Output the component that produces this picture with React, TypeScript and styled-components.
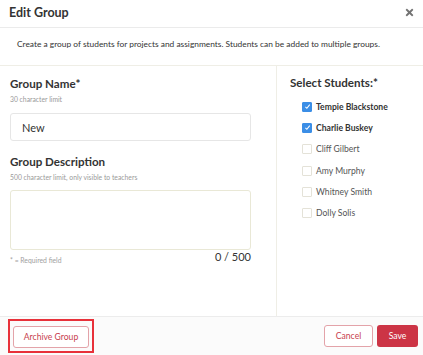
import React from 'react';
import styled, { createGlobalStyle } from 'styled-components';
import { FaTimes } from 'react-icons/fa';

const GlobalStyle = createGlobalStyle`
  html, body {
    margin: 0;
    padding: 0;
    background: #ffffff;
  }
  body {
    font-family: Lato, "Open Sans", "Liberation Sans", sans-serif;
    color: #333333;
  }
`;

const Modal = styled.div`
  width: 423px;
  height: 355px;
  display: flex;
  flex-direction: column;
  background: #ffffff;
  overflow: hidden;
`;

const Header = styled.div`
  height: 28px;
  box-sizing: border-box;
  border-bottom: 1px solid #ebebeb;
  display: flex;
  align-items: center;
  justify-content: space-between;
  padding: 0 8px 2px 9px;
`;

const Title = styled.h1`
  margin: 0;
  font-size: 12.5px;
  font-weight: 700;
  color: #333333;
`;

const CloseButton = styled.button`
  border: none;
  background: none;
  padding: 0;
  display: flex;
  color: #737373;
  font-size: 11px;
`;

const Intro = styled.p`
  margin: 0;
  height: 38px;
  box-sizing: border-box;
  border-bottom: 1px solid #efeee6;
  padding: 11px 0 0 17px;
  font-size: 8.4px;
  color: #333333;
`;

const Body = styled.div`
  flex: 1;
  display: grid;
  grid-template-columns: 277px 1fr;
`;

const LeftColumn = styled.div`
  border-right: 1px solid #efeee6;
  padding: 10px 25px 0 10px;
`;

const RightColumn = styled.div`
  padding: 9px 0 0 13px;
`;

const Label = styled.h2<{ $gap?: number }>`
  margin: ${p => p.$gap ?? 0}px 0 0;
  font-size: 11.6px;
  font-weight: 700;
  line-height: 16px;
  color: #333333;
`;

const Hint = styled.div`
  margin-top: 2px;
  font-size: 6.8px;
  line-height: 10px;
  color: #9a9a9a;
`;

const TextInput = styled.div`
  margin-top: 9px;
  height: 28px;
  box-sizing: border-box;
  border: 1px solid #e6e6e6;
  border-radius: 3px;
  display: flex;
  align-items: center;
  padding-left: 11px;
  font-size: 11px;
  color: #333333;
`;

const TextArea = styled.div`
  margin-top: 8px;
  height: 60px;
  box-sizing: border-box;
  border: 1px solid #e9e8d6;
  border-radius: 3px;
`;

const FieldFooter = styled.div`
  display: flex;
  justify-content: space-between;
  align-items: flex-start;
`;

const Required = styled.span`
  margin-top: 6px;
  font-size: 6.8px;
  color: #a0a0a0;
`;

const Counter = styled.span`
  font-size: 11px;
  color: #333333;
`;

const StudentList = styled.ul`
  list-style: none;
  margin: 9px 0 0 12px;
  padding: 0;
  display: flex;
  flex-direction: column;
  gap: 8.4px;
`;

const StudentRow = styled.li<{ $checked: boolean }>`
  display: flex;
  align-items: center;
  gap: 4px;
  height: 13px;
  font-size: 8.6px;
  font-weight: ${p => (p.$checked ? 700 : 400)};
  color: ${p => (p.$checked ? '#333333' : '#555555')};
`;

const Box = styled.span<{ $checked: boolean }>`
  width: 10px;
  height: 10px;
  box-sizing: border-box;
  border-radius: 1px;
  display: flex;
  align-items: center;
  justify-content: center;
  background: ${p => (p.$checked ? '#3b8ee6' : '#ffffff')};
  border: 1px solid ${p => (p.$checked ? '#3b8ee6' : '#e4e2d8')};
`;

const Footer = styled.div`
  height: 39px;
  box-sizing: border-box;
  border-top: 1px solid #ececec;
  background: #fbfbfb;
  display: flex;
  align-items: center;
  padding: 0 5px 0 8px;
`;

const Highlight = styled.div`
  border: 2px solid #e8313a;
  padding: 3px;
`;

const OutlineButton = styled.button<{ $width: number }>`
  width: ${p => p.$width}px;
  height: 22px;
  box-sizing: border-box;
  border: 1px solid #e3a3a9;
  border-radius: 3px;
  background: #ffffff;
  color: #c8404d;
  font-family: inherit;
  font-size: 8.6px;
  padding: 0;
`;

const SaveButton = styled.button`
  width: 41px;
  height: 22px;
  border: none;
  border-radius: 3px;
  background: #cc3445;
  color: #ffffff;
  font-family: inherit;
  font-size: 8.6px;
  padding: 0;
`;

const Actions = styled.div`
  margin-left: auto;
  display: flex;
  gap: 4px;
`;

const students = [
  { name: 'Tempie Blackstone', checked: true },
  { name: 'Charlie Buskey', checked: true },
  { name: 'Cliff Gilbert', checked: false },
  { name: 'Amy Murphy', checked: false },
  { name: 'Whitney Smith', checked: false },
  { name: 'Dolly Solis', checked: false },
];

const Check = () => (
  <svg width="7" height="7" viewBox="0 0 10 10">
    <path d="M2 5.4 L4.1 7.5 L8.2 2.4" fill="none" stroke="#fff" strokeWidth="1.5" />
  </svg>
);

export default function App() {
  return (
    <>
      <GlobalStyle />
      <Modal>
        <Header>
          <Title>Edit Group</Title>
          <CloseButton aria-label="Close">
            <FaTimes />
          </CloseButton>
        </Header>
        <Intro>
          Create a group of students for projects and assignments. Students can be added to multiple groups.
        </Intro>
        <Body>
          <LeftColumn>
            <Label>Group Name*</Label>
            <Hint>30 character limit</Hint>
            <TextInput>New</TextInput>
            <Label $gap={13}>Group Description</Label>
            <Hint>500 character limit, only visible to teachers</Hint>
            <TextArea />
            <FieldFooter>
              <Required>* = Required field</Required>
              <Counter>0 / 500</Counter>
            </FieldFooter>
          </LeftColumn>
          <RightColumn>
            <Label>Select Students:*</Label>
            <StudentList>
              {students.map(s => (
                <StudentRow key={s.name} $checked={s.checked}>
                  <Box $checked={s.checked}>{s.checked && <Check />}</Box>
                  {s.name}
                </StudentRow>
              ))}
            </StudentList>
          </RightColumn>
        </Body>
        <Footer>
          <Highlight>
            <OutlineButton $width={76}>Archive Group</OutlineButton>
          </Highlight>
          <Actions>
            <OutlineButton $width={49}>Cancel</OutlineButton>
            <SaveButton>Save</SaveButton>
          </Actions>
        </Footer>
      </Modal>
    </>
  );
}
